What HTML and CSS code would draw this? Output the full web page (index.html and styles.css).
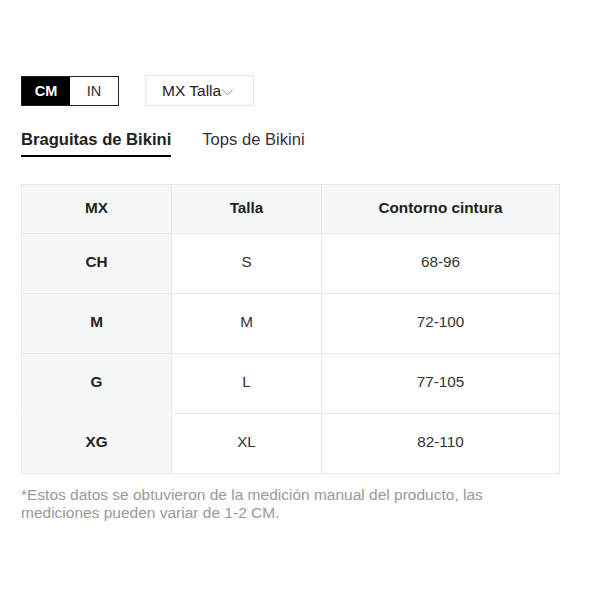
FILE: index.html
```html
<!DOCTYPE html>
<html lang="es">
<head>
<meta charset="utf-8">
<link rel="stylesheet" href="styles.css">
</head>
<body>
<div class="wrap">
  <div class="controls">
    <div class="unit">
      <span class="unit-opt active">CM</span>
      <span class="unit-opt">IN</span>
    </div>
    <div class="select">MX Talla<svg class="chev" width="11" height="7" viewBox="0 0 11 7"><path d="M0.5 0.8 L5.5 5.8 L10.5 0.8" fill="none" stroke="#888" stroke-width="1"/></svg></div>
  </div>
  <div class="tabs">
    <span class="tab active">Braguitas de Bikini</span>
    <span class="tab">Tops de Bikini</span>
  </div>
  <table class="sizes">
    <thead>
      <tr><th>MX</th><th>Talla</th><th>Contorno cintura</th></tr>
    </thead>
    <tbody>
      <tr><td class="first">CH</td><td>S</td><td>68-96</td></tr>
      <tr><td class="first">M</td><td>M</td><td>72-100</td></tr>
      <tr><td class="first nobot">G</td><td>L</td><td>77-105</td></tr>
      <tr><td class="first notop">XG</td><td>XL</td><td>82-110</td></tr>
    </tbody>
  </table>
  <p class="note">*Estos datos se obtuvieron de la medición manual del producto, las mediciones pueden variar de 1-2 CM.</p>
</div>
</body>
</html>
```
FILE: styles.css
```css
html, body { margin: 0; padding: 0; background: #fff; }
body { font-family: "Liberation Sans", Arial, sans-serif; color: #222; }
.wrap { padding: 75px 40px 0 21px; }
.controls { display: flex; align-items: center; gap: 26px; height: 31px; }
.unit { display: flex; border: 1px solid #222; height: 28px; margin-top: 1px; }
.unit-opt { width: 48px; display: flex; align-items: center; justify-content: center; font-size: 14.5px; color: #333; }
.unit-opt.active { width: 48px; background: #000; color: #fff; font-weight: bold; }
.select { box-sizing: border-box; height: 31px; width: 109px; border: 1px solid #e6e6e6; display: flex; align-items: center; padding-left: 16px; font-size: 15.5px; color: #222; padding-top: 1px; }
.chev { margin-left: 1px; margin-top: 3px; }
.tabs { display: flex; gap: 31px; margin-top: 24px; height: 30px; }
.tab { font-size: 16.6px; color: #333; line-height: 19px; }
.tab.active { font-weight: bold; color: #222; border-bottom: 2px solid #000; height: 27px; box-sizing: border-box; }
.sizes { margin-top: 24px; border-collapse: collapse; width: 539px; table-layout: fixed; }
.sizes th, .sizes td { border: 1px solid #e8e8e8; text-align: center; font-size: 15.3px; padding: 0 0 3px; }
.sizes th { background: #f6f8f8; font-weight: bold; color: #222; height: 45px; }
.sizes th:nth-child(1), .sizes td:nth-child(1) { width: 149px; }
.sizes th:nth-child(2), .sizes td:nth-child(2) { width: 149px; }
.sizes td { height: 56px; color: #333; }
.sizes td.first { background: #f6f8f8; font-weight: bold; color: #222; }
.sizes td.nobot { border-bottom-color: #f6f8f8; }
.sizes td.notop { border-top-color: #f6f8f8; }
.note { margin: 12px 0 0; font-size: 15.5px; line-height: 18px; color: #999; }
```
